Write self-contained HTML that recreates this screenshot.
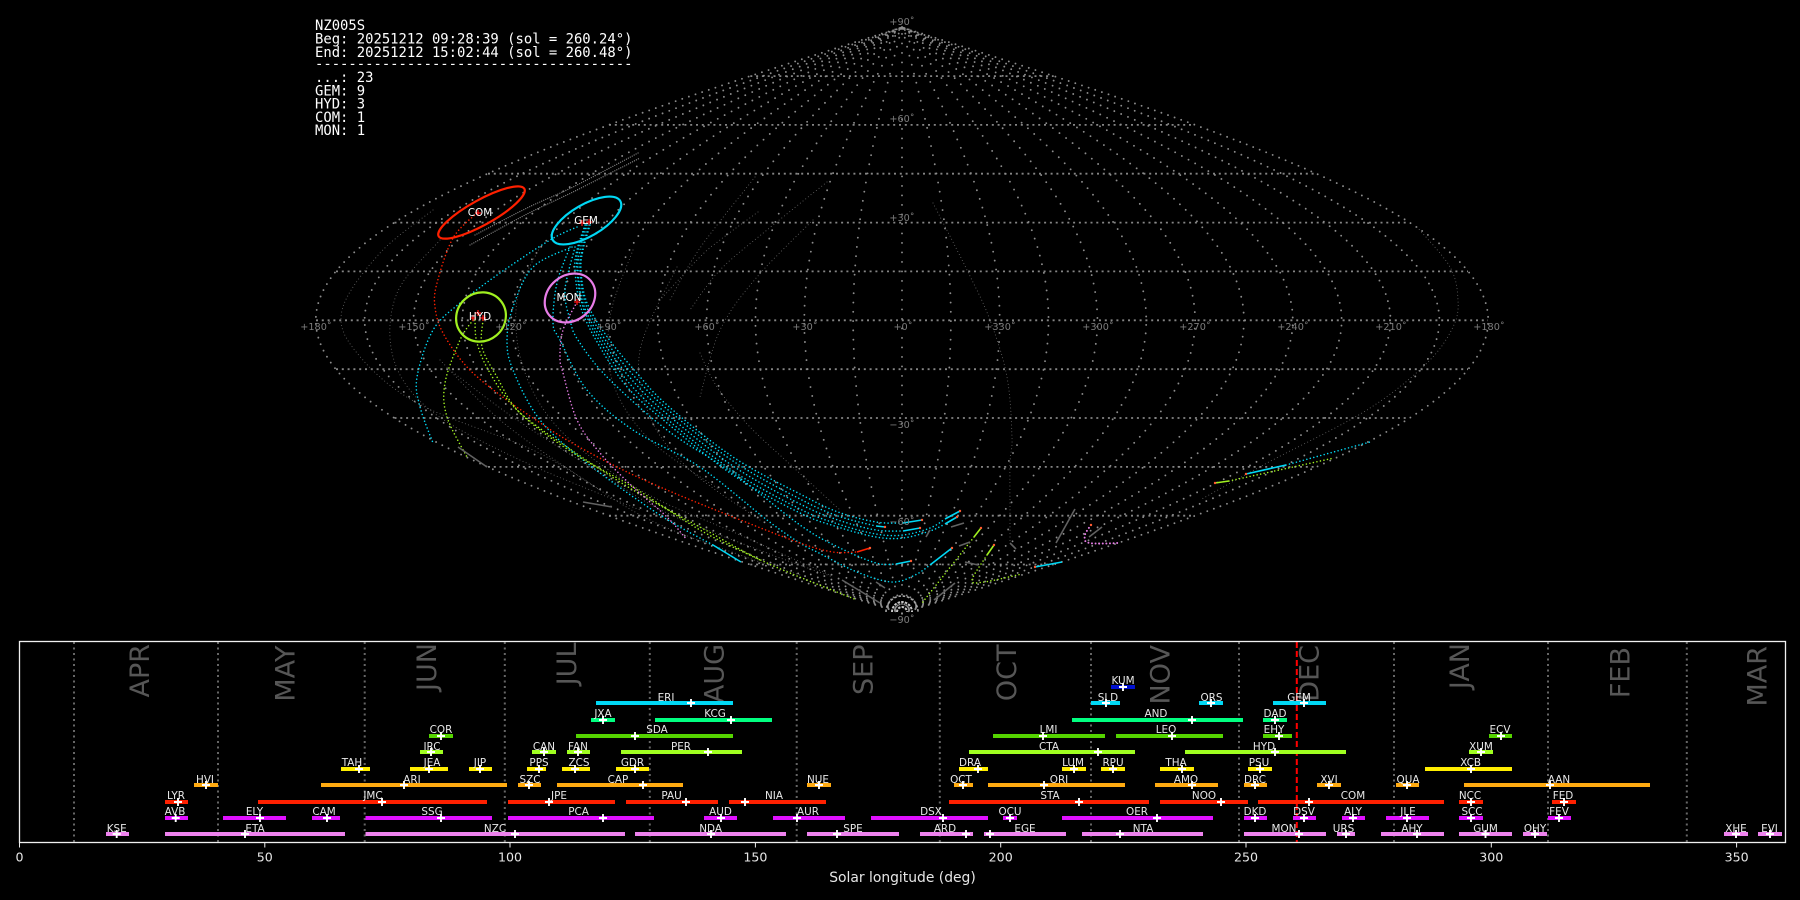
<!DOCTYPE html>
<html><head><meta charset="utf-8"><title>NZ005S</title>
<style>
html,body{margin:0;padding:0;background:#000;width:1800px;height:900px;overflow:hidden}
svg{display:block;position:absolute;left:0;top:0}
text{font-family:"DejaVu Sans","Liberation Sans",sans-serif}
.m text{font-family:"DejaVu Sans Mono","Liberation Mono",monospace;font-size:13.89px;fill:#fff}
.g text{font-size:9.7px;fill:#7d7d7d;text-anchor:middle}
.r text{font-size:10.4px;fill:#fff;text-anchor:middle}
.l text{font-size:10.4px;fill:#e8e8e8;text-anchor:middle}
.mo text{font-size:27px;fill:#565656;text-anchor:end}
.t text{font-size:12.6px;fill:#e6e6e6;text-anchor:middle}
.d polyline{fill:none;stroke-linecap:round;stroke-dasharray:0 3.6;stroke-width:1.6}
.f polyline{fill:none;stroke:#6a6a6a;stroke-linecap:round;stroke-dasharray:0 3.4;stroke-width:1}
.s polyline{fill:none;stroke-width:1.6}
</style></head><body>
<svg width="1800" height="900" viewBox="0 0 1800 900" xmlns="http://www.w3.org/2000/svg">
<rect width="1800" height="900" fill="#000"/>

<g stroke="#858585" stroke-width="1.8" stroke-dasharray="2 3.8" fill="none">
<path d="M316 320.3H1488M336 271.4H1468M336 369.2H1468M394.500 222.600H1409.500M394.500 418H1409.500M488 173.700H1316M488 466.900H1316M609 124.900H1195M609 515.700H1195M750.300 76.100H1053.700M750.300 564.500H1053.700"/>
</g>
<g id="grid"></g>
<g fill="none" stroke="#a8a8a8" stroke-width="1.6">
<path d="M897 612a5 5 0 0 1 10 0M892 612a10 10 0 0 1 20 0" stroke="#c8c8c8" stroke-width="2" stroke-dasharray="2.500 1.200"/>
<path d="M886 612a16 16 0 0 1 32 0" stroke-dasharray="2.500 1.800"/>
</g>

<g class="f">
<polyline points="933,203 967,270 990,320 1007,377 1012,437 1010,463 1010,507 1010,543"/>
<polyline points="827,182 767,230 720,270 690,310"/>
<polyline points="813,220 757,277 720,330 700,397"/>
<polyline points="758,212 720,240 700,257 660,300"/>
<polyline points="755,177 700,248 670,300"/>
<polyline points="700,353 717,387 750,427 793,467 840,510"/>
<polyline points="1417,227 1450,267 1458,300 1453,327 1427,363 1367,410 1267,463 1200,500"/>
<polyline points="433,210 380,253 342,310 357,353 417,403 533,450 600,490"/>
<polyline points="440,240 397,293 393,357 430,410 520,460 640,510"/>
<polyline points="540,247 517,300 523,367 560,430 640,490 740,535 830,575"/>
<polyline points="633,250 610,317 613,383 650,440 720,490"/>
<polyline points="677,267 640,350 650,417 690,470 760,520"/>
<polyline points="450,370 517,420 600,473 667,513 767,553 833,577"/>
<polyline points="440,360 500,420 570,470 650,520 740,555 800,575"/>
<polyline points="475,235 527,208 573,187 640,152" style="stroke:#808080;stroke-dasharray:0 2.200;stroke-width:1.300"/>
<polyline points="470,245 527,214 573,192 640,158" style="stroke:#808080;stroke-dasharray:0 2.200;stroke-width:1.300"/>
</g>

<g class="d" stroke="#00d8f5">
<polyline points="577,227 550,240 500,273 460,303 433,330 417,377 420,407 433,443"/>
<polyline points="572,247 533,267 513,307 507,340 513,370 540,420 587,463 660,515 713,545"/>
<polyline points="570,247 557,283 553,323 560,340 587,390 633,430 700,467 767,520 800,543 819,553 857,572 892,582 915,575 930,565" />
<polyline points="575,247 565,290 570,320 578,340 607,377 667,430 733,473 800,525 838,547 876,563 896,564"/>
<polyline points="590,225 583,250 581,270 587,303 608,338 636,372 667,405 733,457 800,494 838,512 876,522 903,523"/>
<polyline points="589,225 582,250 580,270 586,305 606,341 634,376 667,409 733,461 800,499 838,516 876,526"/>
<polyline points="587,225 580,250 578,270 584,306 604,343 632,380 667,414 733,466 800,504 838,520 876,530 903,531"/>
<polyline points="586,225 578,250 577,270 583,307 602,345 630,384 667,419 733,471 800,509 838,524 876,534 903,535 930,528 945,519"/>
<polyline points="585,225 577,250 575,270 581,308 600,347 628,388 667,423 733,475 800,513 838,527 876,537 903,538 930,531 945,524"/>
<polyline points="1286,465 1370,442" stroke-dasharray="0 4"/>
</g>
<g class="d" stroke="#ff2000" style="stroke-width:1.300">
<polyline points="477,213 453,238 437,283 435,307 443,333 467,367 500,395 533,418 567,440 617,467 667,490 733,517 800,543 833,552 857,552"/>
</g>
<g class="d" stroke="#a0f020">
<polyline points="473,320 460,340 445,383 447,417 467,457"/>
<polyline points="475,320 477,343 490,373 517,410 567,447 633,490 700,527 767,563 857,600"/>
<polyline points="483,320 482,347 497,377 520,413 573,453 633,487 700,530 760,560"/>
<polyline points="974,537 922,603"/>
<polyline points="987,555 972,580 984,582 1022,574"/>
<polyline points="1229,481 1334,458"/>
</g>
<g class="d" stroke="#e87de8">
<polyline points="577,302 563,330 560,357 563,373 577,420 600,453 633,487 667,517 687,540"/>
<polyline points="1091,525 1085,535 1089,543 1120,543" style="stroke-width:2"/>
</g>

<g class="s">
<polyline stroke="#00d8f5" points="945,524 957,517"/>
<polyline stroke="#00d8f5" points="945,519 960,511"/>
<polyline stroke="#00d8f5" points="903,523 922,520"/>
<polyline stroke="#00d8f5" points="903,531 920,528"/>
<polyline stroke="#00d8f5" points="876,526 885,527"/>
<polyline stroke="#00d8f5" points="896,564 911,561"/>
<polyline stroke="#00d8f5" points="930,565 952,548"/>
<polyline stroke="#00d8f5" points="1035,567 1062,562"/>
<polyline stroke="#00d8f5" points="1246,474 1286,465"/>
<polyline stroke="#00d8f5" points="713,545 741,562"/>
<polyline stroke="#ff2000" points="857,552 870,548"/>
<polyline stroke="#a0f020" points="1215,483 1229,481"/>
<polyline stroke="#a0f020" points="981,528 974,537"/>
<polyline stroke="#a0f020" points="994,545 987,555"/>
<g stroke="#626262" style="stroke-width:1.200">
<polyline points="1075,509 1056,543"/><polyline points="1102,527 1089,537"/><polyline points="964,523 951,527"/>
<polyline points="930,530 926,537"/><polyline points="970,542 959,546"/><polyline points="965,562 978,565"/>
<polyline points="1010,543 1016,549"/><polyline points="955,583 934,600"/><polyline points="842,580 880,603"/>
<polyline points="876,582 885,588"/><polyline points="458,447 487,467"/><polyline points="583,502 612,507"/>
</g>
</g>
<g fill="#ff5a30">
<circle cx="957" cy="517" r="1.200"/><circle cx="960" cy="511" r="1.200"/><circle cx="922" cy="520" r="1.200"/><circle cx="920" cy="528" r="1.200"/><circle cx="885" cy="527" r="1.200"/><circle cx="911" cy="561" r="1.200"/><circle cx="952" cy="548" r="1.200"/><circle cx="1035" cy="567" r="1.200"/><circle cx="1246" cy="474" r="1.200"/><circle cx="1215" cy="483" r="1.200"/><circle cx="981" cy="528" r="1.200"/><circle cx="994" cy="545" r="1.200"/><circle cx="870" cy="548" r="1.200"/><circle cx="1091" cy="525" r="1.200"/>
</g>

<g fill="none" stroke-width="2.2">
<ellipse cx="481.500" cy="212.500" rx="49" ry="12.500" transform="rotate(-29 481.500 212.500)" stroke="#ff2000"/>
<ellipse cx="586.500" cy="220.500" rx="39" ry="16" transform="rotate(-30 586.500 220.500)" stroke="#00d8f5"/>
<ellipse cx="570" cy="298" rx="27" ry="22.500" transform="rotate(-40 570 298)" stroke="#e87de8"/>
<ellipse cx="481" cy="317" rx="25.500" ry="24" transform="rotate(-40 481 317)" stroke="#a0f020"/>
</g>
<g stroke="#ff1010" stroke-width="1.200">
<path d="M475 213h6M478 210v6M579 223h6M582 220v6M586 222h6M589 219v6M574 302h6M577 299v6M475 313h6M478 310v6M470 318h6M473 315v6M480 318h6M483 315v6"/>
</g>
<g class="r">
<text x="480" y="216">COM</text><text x="586" y="224">GEM</text><text x="569" y="301">MON</text><text x="480" y="320">HYD</text>
</g>

<g class="g">
<text x="902" y="25">+90˚</text><text x="902" y="122">+60˚</text><text x="902" y="221">+30˚</text><text x="902" y="428">−30˚</text><text x="902" y="525">−60˚</text><text x="902" y="623">−90˚</text>
<text x="316" y="330">+180˚</text><text x="414" y="330">+150˚</text><text x="511" y="330">+120˚</text><text x="609" y="330">+90˚</text><text x="707" y="330">+60˚</text><text x="805" y="330">+30˚</text><text x="903" y="330" fill="#999">+0˚</text><text x="1000" y="330">+330˚</text><text x="1098" y="330">+300˚</text><text x="1195" y="330">+270˚</text><text x="1293" y="330">+240˚</text><text x="1391" y="330">+210˚</text><text x="1489" y="330">+180˚</text>
</g>

<g class="m">
<text x="315" y="30">NZ005S</text>
<text x="315" y="43.400">Beg: 20251212 09:28:39 (sol = 260.24°)</text>
<text x="315" y="56.800">End: 20251212 15:02:44 (sol = 260.48°)</text>
<text x="315" y="68.500">--------------------------------------</text>
<text x="315" y="82">...: 23</text>
<text x="315" y="95.300">GEM: 9</text>
<text x="315" y="108.500">HYD: 3</text>
<text x="315" y="122">COM: 1</text>
<text x="315" y="135.200">MON: 1</text>
</g>

<g class="mo">
<text transform="translate(149,644) rotate(-90)">APR</text>
<text transform="translate(294.700,645.500) rotate(-90)">MAY</text>
<text transform="translate(436,643) rotate(-90)">JUN</text>
<text transform="translate(576,642.500) rotate(-90)">JUL</text>
<text transform="translate(723.600,644) rotate(-90)">AUG</text>
<text transform="translate(872.500,644.500) rotate(-90)">SEP</text>
<text transform="translate(1016,644.500) rotate(-90)">OCT</text>
<text transform="translate(1169.500,645) rotate(-90)">NOV</text>
<text transform="translate(1318.600,645) rotate(-90)">DEC</text>
<text transform="translate(1469,643) rotate(-90)">JAN</text>
<text transform="translate(1629.400,647) rotate(-90)">FEB</text>
<text transform="translate(1766.400,646) rotate(-90)">MAR</text>
</g>

<path d="M74 642V842M218 642V842M364.700 642V842M504.800 642V842M649.800 642V842M796.700 642V842M939.800 642V842M1091 642V842M1239 642V842M1394 642V842M1548 642V842M1686.800 642V842" stroke="#666" stroke-width="2" stroke-dasharray="2 3.500" fill="none"/>
<path d="M1296.800 642V842" stroke="#f00" stroke-width="2" stroke-dasharray="6 3" fill="none"/>

<g stroke-width="4" fill="none">
<path stroke="#ee82ee" d="M106 834H129M165 834H345M365.500 834H625M635 834H786M807 834H899M920 834H973M984 834H1066M1082 834H1203M1244 834H1326M1337 834H1355M1381 834H1444M1459 834H1512M1523 834H1547M1724 834H1748M1758 834H1782"/>
<path stroke="#e010ff" d="M165 818H188M223 818H286M312 818H340M365.500 818H492M508 818H654M704 818H737M773 818H845M871 818H988M1003 818H1017M1062 818H1213M1244 818H1267M1293 818H1316M1342 818H1365M1386 818H1429M1459 818H1483M1548 818H1571"/>
<path stroke="#ff2000" d="M165 802H188M258 802H487M508 802H615M626 802H718M729 802H826M949 802H1149M1160 802H1248M1258 802H1444M1459 802H1483M1552 802H1576"/>
<path stroke="#ffaa10" d="M194 785H218M321 785H507M518 785H541M557 785H683M807 785H831M954 785H973M988 785H1125M1155 785H1218M1244 785H1267M1317 785H1341M1396 785H1419M1464 785H1650"/>
<path stroke="#ffee00" d="M341 769H370M410 769H448M469 769H492M527 769H546M562 769H590M616 769H649M959 769H988M1062 769H1086M1101 769H1125M1160 769H1194M1248 769H1272M1425 769H1512"/>
<path stroke="#a0ff20" d="M420 752H443M532 752H556M567 752H590M621 752H742M969 752H1135M1185 752H1346M1469 752H1493"/>
<path stroke="#55d400" d="M429 736H453M576 736H733M993 736H1105M1116 736H1223M1263 736H1292M1489 736H1512"/>
<path stroke="#00ff80" d="M591 720H615M655 720H772M1072 720H1243M1263 720H1287"/>
<path stroke="#00d8f5" d="M596 703H733M1091 703H1120M1199 703H1223M1273 703H1326"/>
<path stroke="#0010d0" d="M1111 687H1135"/>
</g>

<g class="l">
<text x="116.700" y="832">KSE</text><text x="255" y="832">ETA</text><text x="495" y="832">NZC</text><text x="710.600" y="832">NDA</text><text x="853" y="832">SPE</text><text x="945" y="832">ARD</text><text x="1025" y="832">EGE</text><text x="1143" y="832">NTA</text><text x="1284" y="832">MON</text><text x="1343.500" y="832">URS</text><text x="1412" y="832">AHY</text><text x="1485.500" y="832">GUM</text><text x="1535" y="832">OHY</text><text x="1736" y="832">XHE</text><text x="1769.500" y="832">EVI</text>
<text x="175" y="815">AVB</text><text x="254.500" y="815">ELY</text><text x="324" y="815">CAM</text><text x="432" y="815">SSG</text><text x="578.600" y="815">PCA</text><text x="720.500" y="815">AUD</text><text x="808" y="815">AUR</text><text x="931" y="815">DSX</text><text x="1010" y="815">OCU</text><text x="1137" y="815">OER</text><text x="1255" y="815">DKD</text><text x="1304" y="815">DSV</text><text x="1353" y="815">ALY</text><text x="1408" y="815">JLE</text><text x="1472" y="815">SCC</text><text x="1559" y="815">FEV</text>
<text x="176" y="799">LYR</text><text x="373" y="799">JMC</text><text x="559" y="799">JPE</text><text x="671.600" y="799">PAU</text><text x="774" y="799">NIA</text><text x="1050" y="799">STA</text><text x="1204" y="799">NOO</text><text x="1353" y="799">COM</text><text x="1470" y="799">NCC</text><text x="1563" y="799">FED</text>
<text x="205" y="783">HVI</text><text x="412" y="783">ARI</text><text x="530" y="783">SZC</text><text x="618" y="783">CAP</text><text x="818" y="783">NUE</text><text x="961" y="783">OCT</text><text x="1059" y="783">ORI</text><text x="1186" y="783">AMO</text><text x="1255" y="783">DRC</text><text x="1329" y="783">XVI</text><text x="1408" y="783">QUA</text><text x="1559" y="783">AAN</text>
<text x="352" y="766">TAH</text><text x="432" y="766">JEA</text><text x="480" y="766">JIP</text><text x="539" y="766">PPS</text><text x="579" y="766">ZCS</text><text x="632.500" y="766">GDR</text><text x="970" y="766">DRA</text><text x="1073" y="766">LUM</text><text x="1113" y="766">RPU</text><text x="1176" y="766">THA</text><text x="1259" y="766">PSU</text><text x="1470.600" y="766">XCB</text>
<text x="432" y="750">IRC</text><text x="544" y="750">CAN</text><text x="578" y="750">FAN</text><text x="681" y="750">PER</text><text x="1049" y="750">CTA</text><text x="1264" y="750">HYD</text><text x="1481" y="750">XUM</text>
<text x="441" y="733">COR</text><text x="657" y="733">SDA</text><text x="1048.500" y="733">LMI</text><text x="1166" y="733">LEO</text><text x="1274" y="733">EHY</text><text x="1500" y="733">ECV</text>
<text x="603" y="717">JXA</text><text x="715" y="717">KCG</text><text x="1156" y="717">AND</text><text x="1275" y="717">DAD</text>
<text x="666" y="701">ERI</text><text x="1108" y="701">SLD</text><text x="1211.500" y="701">ORS</text><text x="1299" y="701">GEM</text>
<text x="1123" y="684">KUM</text>
</g>

<path id="mk" fill="none" stroke="#fff" stroke-width="1.900" d=""/>

<rect x="19.500" y="641.500" width="1766" height="201" fill="none" stroke="#f0f0f0" stroke-width="1.300"/>
<path d="M19.500 842.500v5M264.800 842.500v5M510 842.500v5M755.400 842.500v5M1000.700 842.500v5M1246 842.500v5M1491.300 842.500v5M1736.600 842.500v5" stroke="#eee" stroke-width="1"/>
<g class="t">
<text x="19.500" y="861.500">0</text><text x="264.800" y="861.500">50</text><text x="510" y="861.500">100</text><text x="755.400" y="861.500">150</text><text x="1000.700" y="861.500">200</text><text x="1246" y="861.500">250</text><text x="1491.300" y="861.500">300</text><text x="1736.600" y="861.500">350</text>
</g>
<text x="902.500" y="882" text-anchor="middle" style="font-size:13.89px;fill:#e6e6e6">Solar longitude (deg)</text>
</svg>
<script>
(function(){
var NS='http://www.w3.org/2000/svg';
var cx=902,cy=320.3,k=3.2567,rad=Math.PI/180;
var g=document.getElementById('grid');
/* meridians: dotted evenly along arc length */
for(var lon=-180;lon<=180;lon+=15){
 var d='';
 for(var lat=-90;lat<=90;lat+=1){
  var x=cx+lon*k*Math.cos(lat*rad),y=cy-lat*k;
  d+=(d?'L':'M')+x.toFixed(1)+' '+y.toFixed(1);
 }
 var p=document.createElementNS(NS,'path');
 p.setAttribute('d',d);p.setAttribute('stroke','#8c8c8c');p.setAttribute('stroke-width','1.9');
 p.setAttribute('stroke-linecap','round');p.setAttribute('fill','none');
 p.setAttribute('stroke-dasharray','0 '+(9.5-Math.abs(lon)/180*2.5).toFixed(2));
 g.appendChild(p);
}
/* radial bars hugging the lower envelope near the south pole */
var b='';
for(var f=-88;f>=-68;f-=0.45){
 var c=Math.cos(f*rad),ex=586*c,ey=cy-f*k,L=13,nx=0.31,ny=-0.95;
 b+='M'+(cx-ex).toFixed(1)+' '+ey.toFixed(1)+'l'+(nx*L).toFixed(1)+' '+(ny*L).toFixed(1);
 b+='M'+(cx+ex).toFixed(1)+' '+ey.toFixed(1)+'l'+(-nx*L).toFixed(1)+' '+(ny*L).toFixed(1);
}
var q=document.createElementNS(NS,'path');
q.setAttribute('d',b);q.setAttribute('stroke','#6a6a6a');q.setAttribute('stroke-width','1.3');
q.setAttribute('stroke-dasharray','3 2');q.setAttribute('fill','none');
g.appendChild(q);
/* smooth the dotted tracks with Catmull-Rom sampling */
document.querySelectorAll('.d polyline,.f polyline').forEach(function(el){
 var a=el.getAttribute('points').trim().split(/\s+/).map(function(s){return s.split(',').map(Number);});
 if(a.length<3)return;
 var o=[];
 for(var i=0;i<a.length-1;i++){
  var p0=a[Math.max(i-1,0)],p1=a[i],p2=a[i+1],p3=a[Math.min(i+2,a.length-1)];
  for(var j=0;j<10;j++){
   var t=j/10,t2=t*t,t3=t2*t;
   var xx=.5*(2*p1[0]+(p2[0]-p0[0])*t+(2*p0[0]-5*p1[0]+4*p2[0]-p3[0])*t2+(3*p1[0]-p0[0]-3*p2[0]+p3[0])*t3);
   var yy=.5*(2*p1[1]+(p2[1]-p0[1])*t+(2*p0[1]-5*p1[1]+4*p2[1]-p3[1])*t2+(3*p1[1]-p0[1]-3*p2[1]+p3[1])*t3);
   o.push(xx.toFixed(1)+','+yy.toFixed(1));
  }
 }
 o.push(a[a.length-1].join(','));
 el.setAttribute('points',o.join(' '));
});
var mk=[[116.7,834],[245,834],[515,834],[711,834],[837,834],[966,834],[990,834],[1120,834],[1299,834],[1346,834],[1417,834],[1485.5,834],[1535,834],[1736,834],[1770,834],
[175.7,818],[260,818],[327,818],[441,818],[603,818],[721,818],[797,818],[943,818],[1010,818],[1157,818],[1255,818],[1304,818],[1353,818],[1407,818],[1471,818],[1559,818],
[178,802],[382,802],[549,802],[686,802],[745,802],[1079,802],[1221,802],[1309,802],[1471,802],[1564,802],
[206,785],[404,785],[529,785],[643,785],[819,785],[963,785],[1044,785],[1192,785],[1255,785],[1329,785],[1407,785],[1550,785],
[359,769],[429,769],[480,769],[539,769],[575,769],[635,769],[978,769],[1074,769],[1113,769],[1182,769],[1260,769],[1471,769],
[431,752],[544,752],[578,752],[708,752],[1098,752],[1275,752],[1481,752],
[441,736],[635,736],[1043,736],[1172,736],[1279,736],[1501,736],
[603,720],[731,720],[1192,720],[1275,720],
[691,703],[1106,703],[1211,703],[1304,703],
[1123,687]],s='';
mk.forEach(function(m){s+='M'+(m[0]-4)+' '+m[1]+'h8M'+m[0]+' '+(m[1]-4)+'v8';});
document.getElementById('mk').setAttribute('d',s);
})();
</script>
</body></html>
